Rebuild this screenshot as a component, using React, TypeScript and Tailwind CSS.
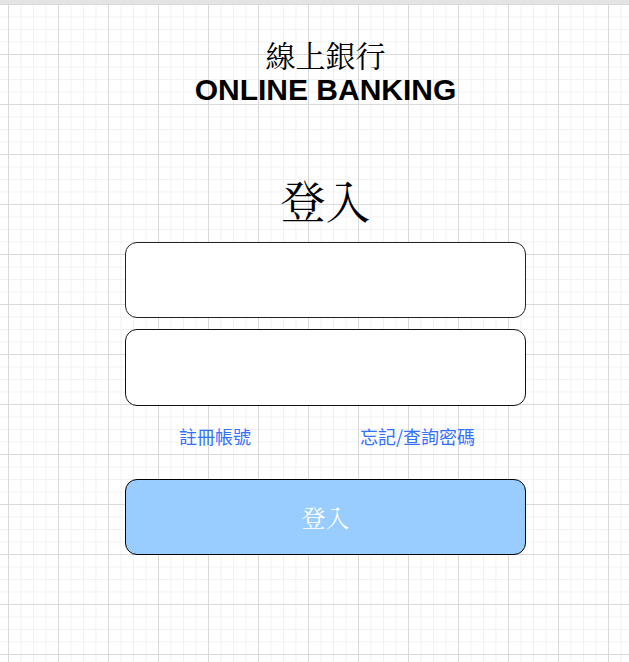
const serif = "font-['Noto_Serif_CJK_TC','Noto_Sans_CJK_TC',serif]";
const sans = "font-['Noto_Sans_CJK_TC','Liberation_Sans',sans-serif]";

export default function App() {
  return (
    <div className="w-[629px] h-[662px] overflow-hidden bg-white">
      <div className="h-1 bg-[#e4e4e4]" />
      <div className="h-[658px] bg-white bg-[linear-gradient(to_right,#dadada_1px,transparent_1px),linear-gradient(to_bottom,#dadada_1px,transparent_1px),linear-gradient(to_right,#f1f1f1_1px,transparent_1px),linear-gradient(to_bottom,#f1f1f1_1px,transparent_1px)] bg-[size:50px_50px,50px_50px,12.5px_12.5px,12.5px_12.5px] bg-[position:8px_0px,8px_0px,8px_0px,8px_0px]">
        <div className="ml-[125px] flex w-[401px] flex-col pt-[33px]">
          <h1 className={`${serif} text-center text-[30px] leading-[34px] text-black`}>線上銀行</h1>
          <h2 className="mt-[4px] text-center font-['Liberation_Sans',sans-serif] text-[30px] font-bold leading-[30px] text-black">
            ONLINE BANKING
          </h2>
          <div className={`${serif} mt-[72px] text-center text-[45px] leading-[45px] text-black`}>登入</div>
          <input
            className="mt-[20px] h-[76px] rounded-[12px] border border-[#222] bg-white px-4 outline-none"
            aria-label="帳號"
          />
          <input
            type="password"
            className="mt-[11px] h-[77px] rounded-[12px] border border-[#111] bg-white px-4 outline-none"
            aria-label="密碼"
          />
          <div className={`${sans} mt-[19px] flex pl-[54px] text-[18px] leading-[22px] text-[#3370ff]`}>
            <a className="w-[181px] cursor-pointer">註冊帳號</a>
            <a className="cursor-pointer">忘記/查詢密碼</a>
          </div>
          <button className={`${serif} mt-[32px] h-[76px] rounded-[12px] border border-black bg-[#99ccff] text-[24px] text-white`}>
            登入
          </button>
        </div>
      </div>
    </div>
  );
}
